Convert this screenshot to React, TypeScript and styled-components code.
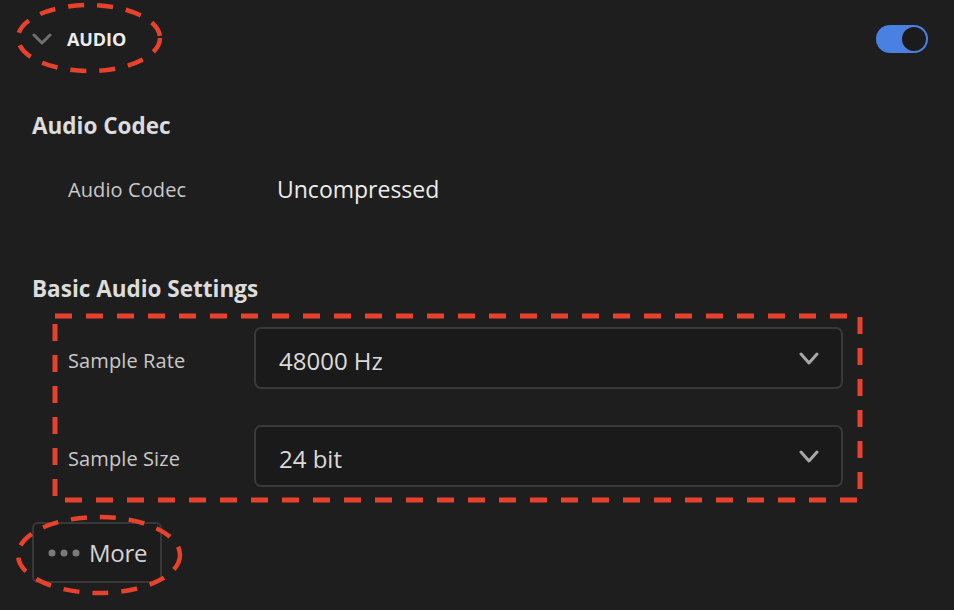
import React from "react";
import styled, { createGlobalStyle } from "styled-components";

const Global = createGlobalStyle`
  html, body { margin: 0; padding: 0; background: #1e1e1e; }
  body { font-family: "Open Sans", "Noto Sans", sans-serif; }
  * { box-sizing: border-box; }
`;

const Page = styled.div`
  position: relative;
  width: 954px;
  height: 610px;
  overflow: hidden;
  background: #1e1e1e;
  padding: 0 26px 0 32px;
  display: flex;
  flex-direction: column;
`;

const Header = styled.div`
  height: 78px;
  display: flex;
  align-items: center;
  justify-content: space-between;
`;

const HeaderLeft = styled.div`
  display: flex;
  align-items: center;
  gap: 15px;
`;

const Title = styled.span`
  color: #ededed;
  font-weight: 700;
  font-size: 18px;
  letter-spacing: -0.1px;
`;

const Toggle = styled.div`
  width: 52px;
  height: 28px;
  border-radius: 14px;
  background: #4b80e3;
  display: flex;
  align-items: center;
  justify-content: flex-end;
  padding-right: 2px;
`;

const Knob = styled.div`
  width: 24px;
  height: 24px;
  border-radius: 50%;
  background: #1b1b1b;
`;

const SectionHeading = styled.h2<{ $top: number }>`
  margin: ${(p) => p.$top}px 0 0 0;
  color: #dcdcdc;
  font-weight: 700;
  font-size: 22.5px;
  line-height: 30px;
`;

const Row = styled.div<{ $top: number }>`
  margin-top: ${(p) => p.$top}px;
  padding-left: 36px;
  display: flex;
  align-items: center;
  height: 62px;
`;

const Label = styled.div<{ $width: number; $shift?: number }>`
  width: ${(p) => p.$width}px;
  padding-top: ${(p) => p.$shift ?? 0}px;
  color: #c9c9c9;
  font-size: 20px;
  letter-spacing: 0.1px;
`;

const Value = styled.div`
  color: #ececec;
  font-size: 23px;
`;

const Select = styled.div`
  width: 589px;
  height: 62px;
  border: 2px solid #393939;
  border-radius: 7px;
  background: #1a1a1a;
  display: flex;
  align-items: center;
  justify-content: space-between;
  padding: 0 22px 0 23px;
  color: #dadada;
  font-size: 24px;
`;

const SelectText = styled.span`
  padding-top: 4px;
`;

const MoreButton = styled.div`
  margin-top: 35px;
  width: 130px;
  height: 61px;
  border: 2px solid #383838;
  border-radius: 6px;
  background: #1c1c1c;
  display: flex;
  align-items: center;
  gap: 9px;
  padding-left: 14px;
  color: #d4d4d4;
  font-size: 24px;
  letter-spacing: -0.3px;
`;

const Overlay = styled.svg`
  position: absolute;
  left: 0;
  top: 0;
  pointer-events: none;
`;

const Chevron = ({ color, w, h, sw }: { color: string; w: number; h: number; sw: number }) => (
  <svg width={w} height={h} viewBox={`0 0 ${w} ${h}`}>
    <polyline
      points={`${sw / 2 + 0.5},${sw / 2 + 0.5} ${w / 2},${h - sw / 2 - 0.5} ${w - sw / 2 - 0.5},${sw / 2 + 0.5}`}
      fill="none"
      stroke={color}
      strokeWidth={sw}
      strokeLinecap="round"
      strokeLinejoin="round"
    />
  </svg>
);

const Dots = () => (
  <svg width="32" height="8" viewBox="0 0 32 8">
    <circle cx="4" cy="4" r="3.5" fill="#7a7a7a" />
    <circle cx="16" cy="4" r="3.5" fill="#7a7a7a" />
    <circle cx="28" cy="4" r="3.5" fill="#7a7a7a" />
  </svg>
);

export default function App() {
  return (
    <>
      <Global />
      <Page>
        <Header>
          <HeaderLeft>
            <Chevron color="#707070" w={20} h={12} sw={3} />
            <Title>AUDIO</Title>
          </HeaderLeft>
          <Toggle>
            <Knob />
          </Toggle>
        </Header>

        <SectionHeading $top={33}>Audio Codec</SectionHeading>
        <Row $top={17}>
          <Label $width={209}>Audio Codec</Label>
          <Value>Uncompressed</Value>
        </Row>

        <SectionHeading $top={54}>Basic Audio Settings</SectionHeading>
        <Row $top={23}>
          <Label $width={186} $shift={4}>Sample Rate</Label>
          <Select>
            <SelectText>48000 Hz</SelectText>
            <Chevron color="#a8a8a8" w={20} h={13} sw={3} />
          </Select>
        </Row>
        <Row $top={36}>
          <Label $width={186} $shift={4}>Sample Size</Label>
          <Select>
            <SelectText>24 bit</SelectText>
            <Chevron color="#a8a8a8" w={20} h={13} sw={3} />
          </Select>
        </Row>

        <MoreButton>
          <Dots />
          <span>More</span>
        </MoreButton>

        <Overlay width="954" height="610" viewBox="0 0 954 610">
          <ellipse cx="89" cy="38" rx="71" ry="33" fill="none" stroke="#e8412c" strokeWidth="4.5" strokeDasharray="16 13" />
          <rect x="55" y="316" width="805" height="184" fill="none" stroke="#e8412c" strokeWidth="5" strokeDasharray="17 14" />
          <ellipse cx="99" cy="555" rx="81" ry="38" fill="none" stroke="#e8412c" strokeWidth="4.5" strokeDasharray="16 13" />
        </Overlay>
      </Page>
    </>
  );
}
